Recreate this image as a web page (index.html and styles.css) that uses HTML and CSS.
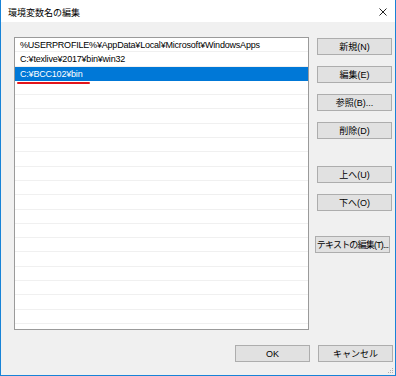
FILE: index.html
```html
<!DOCTYPE html>
<html lang="ja">

<head>
    <meta charset="UTF-8">
    <meta name="viewport" content="width=device-width, initial-scale=1.0">
    <title>環境変数名の編集</title>
    <link rel="stylesheet" href="styles.css">
</head>

<body>

    <div class="window">
        <div class="titlebar">
            <span class="title">環境変数名の編集</span>
            <svg class="close" width="8" height="8" viewBox="0 0 8 8">
                <path d="M0.5 0.5 L7.5 7.5 M7.5 0.5 L0.5 7.5" stroke="#222" stroke-width="1" fill="none" />
            </svg>
        </div>

        <div class="client">
            <div class="main">
                <div class="list">
                    <div class="row">%USERPROFILE%¥AppData¥Local¥Microsoft¥WindowsApps</div>
                    <div class="row">C:¥texlive¥2017¥bin¥win32</div>
                    <div class="row selected">C:¥BCC102¥bin<span class="mark"></span></div>
                    <div class="row"></div>
                    <div class="row"></div>
                    <div class="row"></div>
                    <div class="row"></div>
                    <div class="row"></div>
                    <div class="row"></div>
                    <div class="row"></div>
                    <div class="row"></div>
                    <div class="row"></div>
                    <div class="row"></div>
                    <div class="row"></div>
                    <div class="row"></div>
                    <div class="row"></div>
                    <div class="row"></div>
                    <div class="row"></div>
                    <div class="row"></div>
                    <div class="row"></div>
                    <div class="row"></div>
                </div>

                <div class="side">
                    <button class="btn">新規(N)</button>
                    <button class="btn">編集(E)</button>
                    <button class="btn">参照(B)...</button>
                    <button class="btn">削除(D)</button>
                    <button class="btn group">上へ(U)</button>
                    <button class="btn">下へ(O)</button>
                    <button class="btn group text">テキストの編集(T)...</button>
                </div>
            </div>

            <div class="footer">
                <button class="btn">OK</button>
                <button class="btn">キャンセル</button>
            </div>
        </div>

        <svg class="grip" width="6" height="6" viewBox="0 0 6 6">
            <rect x="4" y="0" width="1" height="1" fill="#b0b0b0" />
            <rect x="2" y="2" width="1" height="1" fill="#b0b0b0" />
            <rect x="4" y="2" width="1" height="1" fill="#b0b0b0" />
            <rect x="0" y="4" width="1" height="1" fill="#b0b0b0" />
            <rect x="2" y="4" width="1" height="1" fill="#b0b0b0" />
            <rect x="4" y="4" width="1" height="1" fill="#b0b0b0" />
        </svg>
    </div>

</body>

</html>
```

FILE: styles.css
```css
body{
    margin: 0;
    font-family: "Liberation Sans", "Noto Sans CJK JP", sans-serif;
    font-size: 9px;
    color: #000;
}

.window{
    position: relative;
    width: 396px;
    height: 376px;
    box-sizing: border-box;
    border: 1px solid #1883d7;
    border-top: none;
    background-color: #f0f0f0;
    display: flex;
    flex-direction: column;
}

.titlebar{
    height: 22px;
    background-color: #ffffff;
    display: flex;
    align-items: center;
    justify-content: space-between;
    padding: 0 8px 0 7px;
}

.title{
    font-family: "Noto Sans CJK JP", sans-serif;
    font-size: 9px;
    padding-top: 2px;
}

.close{
    margin-top: 1px;
}

.client{
    flex: 1;
    padding: 15px 2px 0 13px;
}

.main{
    display: flex;
    gap: 8px;
}

.list{
    width: 295px;
    height: 293px;
    box-sizing: border-box;
    border: 1px solid #9a9a9a;
    background-color: #ffffff;
    overflow: hidden;
}

.row{
    position: relative;
    height: 14.3px;
    line-height: 14px;
    box-sizing: border-box;
    padding-left: 5px;
    border-bottom: 1px solid #f0f0f0;
    white-space: nowrap;
    letter-spacing: -0.2px;
}

.row.selected{
    background-color: #0078d7;
    color: #ffffff;
    border-bottom-color: #0078d7;
}

.mark{
    position: absolute;
    left: 2px;
    top: 15px;
    width: 73px;
    height: 2px;
    border-radius: 1px;
    background-color: #e3141b;
}

.side{
    display: flex;
    flex-direction: column;
    gap: 11px;
    padding-top: 1px;
}

.btn{
    width: 75px;
    height: 17px;
    padding: 0;
    background-color: #e1e1e1;
    border: 1px solid #adadad;
    font-family: "Liberation Sans", "Noto Sans CJK JP", sans-serif;
    font-size: 9px;
    color: #000;
    white-space: nowrap;
}

.side .group{
    margin-top: 16px;
}

.side .text{
    margin-top: 14px;
    margin-left: -2px;
    letter-spacing: -0.8px;
}

.footer{
    display: flex;
    justify-content: flex-end;
    gap: 8px;
    margin-top: 15px;
}

.grip{
    position: absolute;
    right: 1px;
    bottom: 1px;
}
```
